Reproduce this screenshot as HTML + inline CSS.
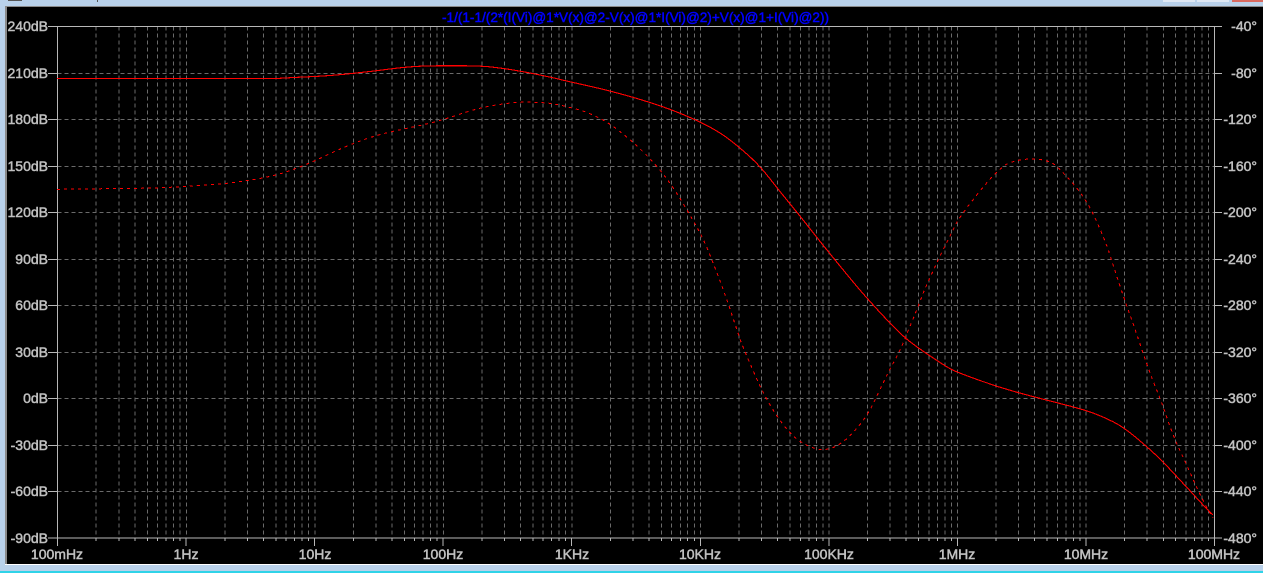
<!DOCTYPE html>
<html>
<head>
<meta charset="utf-8">
<style>
html,body{margin:0;padding:0;width:1263px;height:573px;overflow:hidden;background:#b9d1ea}
svg{display:block;position:absolute;left:0;top:0}
text{font-family:"Liberation Sans",sans-serif;font-size:14px;fill:#c0c0c0;stroke:#c0c0c0;stroke-width:.5}
.l{text-anchor:end}
.b{text-anchor:middle}
</style>
</head>
<body>
<svg width="1263" height="573" viewBox="0 0 1263 573">
<rect x="0" y="0" width="1263" height="573" fill="#b9d1ea"/>
<rect x="5" y="6" width="1258" height="1" fill="#8a8a8a"/>
<rect x="5" y="6" width="2" height="558" fill="#8a8a8a"/>
<rect x="7" y="7" width="1256" height="557" fill="#000"/>
<rect x="5" y="564" width="1258" height="1" fill="#fff"/>
<rect x="0" y="571" width="1263" height="2" fill="#2fd3e8"/>
<rect x="1163" y="0" width="32" height="2" fill="#dfe8f3"/>
<rect x="1197" y="0" width="32" height="2" fill="#dfe8f3"/>
<rect x="1232" y="0" width="31" height="2" fill="#d9695f"/>
<rect x="8" y="0" width="14" height="1" fill="#555"/>
<rect x="97" y="0" width="1" height="2" fill="#555"/>
<defs>
<g id="d" shape-rendering="crispEdges">
<g stroke="#6a6a6a" stroke-width="1" stroke-dasharray="4 3" fill="none">
<path d="M38.7 26.5V538M61.3 26.5V538M77.4 26.5V538M89.8 26.5V538M100 26.5V538M108.6 26.5V538M116 26.5V538M122.6 26.5V538"/>
</g>
<g stroke="#b8b8b8" stroke-width="1" fill="none">
<path d="M38.7 538V541M61.3 538V541M77.4 538V541M89.8 538V541M100 538V541M108.6 538V541M116 538V541M122.6 538V541M128.55 538V546"/>
</g>
</g>
</defs>
<g shape-rendering="crispEdges">
<use href="#d" x="57.5"/>
<use href="#d" x="186.05"/>
<use href="#d" x="314.6"/>
<use href="#d" x="443.15"/>
<use href="#d" x="571.7"/>
<use href="#d" x="700.25"/>
<use href="#d" x="828.8"/>
<use href="#d" x="957.35"/>
<use href="#d" x="1085.9"/>
<path d="M186.5 26.5V538M315 26.5V538M443.5 26.5V538M572 26.5V538M700.5 26.5V538M829 26.5V538M957.5 26.5V538M1086 26.5V538" stroke="#6a6a6a" stroke-dasharray="4 3" fill="none"/>
<path d="M57.5 73.5H1214.5M57.5 119.5H1214.5M57.5 166.5H1214.5M57.5 212.5H1214.5M57.5 259.5H1214.5M57.5 305.5H1214.5M57.5 352.5H1214.5M57.5 398.5H1214.5M57.5 445.5H1214.5M57.5 491.5H1214.5" stroke="#6a6a6a" stroke-dasharray="4 3" fill="none"/>
<path d="M48 26.5H1222M48 538H1222M57.5 26V546M1214.5 26V546" stroke="#b8b8b8" fill="none"/>
<path d="M48 73.5H57M48 119.5H57M48 166.5H57M48 212.5H57M48 259.5H57M48 305.5H57M48 352.5H57M48 398.5H57M48 445.5H57M48 491.5H57M1215 73.5H1222M1215 119.5H1222M1215 166.5H1222M1215 212.5H1222M1215 259.5H1222M1215 305.5H1222M1215 352.5H1222M1215 398.5H1222M1215 445.5H1222M1215 491.5H1222" stroke="#b8b8b8" fill="none"/>
<path fill="none" stroke="#ff0000" stroke-width="1" stroke-dasharray="3 4" d="M57 189.3L121 188.5Q150 188.3 166 187.5Q183 186.7 203 185.3Q223 184 235 182.3Q247 180.7 257 179Q267 177.3 277 174.6Q287 172 298 167.6Q310 163.3 328 154.5Q347 145.7 362 140.3Q377 135 392 131.6Q407 128.3 422 125Q437 121.7 452 116.7Q467 111.7 478 108.7Q490 105.7 505 103.7Q520 101.7 533 102.2Q547 102.7 554 104Q562 105.3 574 108.5Q587 111.7 598 117.5Q610 123.3 621 132.5Q633 141.7 645 153.7Q657 165.7 666 177.8Q675 190 684 205Q693 220 700 233Q707 246.7 713 263Q720 280 729 306Q738 333 741 342Q745 352 755 375Q765 398 777 416Q790 435 801 442Q813 449 821 449.5Q830 450 838 445Q847 440 857 428Q867 417 875 400Q883 383 891 367Q900 352 908 331Q917 310 924 291Q932 273 942 252Q952 232 957 222Q963 212 980 191Q997 170 1007 164Q1018 159 1032 159Q1047 159 1055 165Q1063 172 1075 186Q1087 200 1096 220Q1105 240 1109 252Q1113 265 1120 286Q1127 307 1130 315Q1133 323 1140 344Q1147 365 1153 381Q1160 398 1165 412Q1170 427 1176 442Q1183 457 1193 479Q1203 502 1213 518"/>
<path fill="none" stroke="#ff0000" stroke-width="1.1" d="M57 78.3L280 78.3Q296 77.3 308 76.8Q320 76.3 332.5 75.3Q345 74.3 360 72.6Q375 71 389 69.1Q403 67.3 415 66.5Q427 65.7 453 65.7Q480 65.7 491.5 67Q503 68.3 515 70.3Q527 72.3 540 75Q553 77.7 559 79.2Q565 80.7 587.5 85.7Q610 90.7 633.5 97.5Q657 104.3 675 111.3Q693 118.3 706.5 125.3Q720 132.3 730 140Q740 147.7 750 156.8Q760 166 770 178.8Q780 191.7 790 203.8Q800 216 813 232.5Q826 249 839 264.8Q852 280.7 859.5 289.5Q867 298.3 878.5 310.8Q890 323.3 898.5 331.6Q907 340 918.5 348Q930 356 940 362.5Q950 369 955 371.1Q960 373.3 978.5 380Q997 386.7 1015 391.7Q1033 396.7 1058 403Q1083 409.3 1093 413Q1103 416.7 1113 421.7Q1123 426.7 1135 436.7Q1147 446.7 1155 454.2Q1163 461.7 1173 472.5Q1183 483.3 1193 494Q1203 505 1208 510L1213 515"/>
</g>
<text x="442" y="22" textLength="387" lengthAdjust="spacingAndGlyphs" style="fill:#0000ff;stroke:#0000ff">-1/(1-1/(2*(I(Vi)@1*V(x)@2-V(x)@1*I(Vi)@2)+V(x)@1+I(Vi)@2))</text>
<text class="l" x="48" y="31">240dB</text>
<text class="l" x="48" y="78">210dB</text>
<text class="l" x="48" y="124">180dB</text>
<text class="l" x="48" y="171">150dB</text>
<text class="l" x="48" y="217">120dB</text>
<text class="l" x="48" y="264">90dB</text>
<text class="l" x="48" y="310">60dB</text>
<text class="l" x="48" y="357">30dB</text>
<text class="l" x="48" y="403">0dB</text>
<text class="l" x="48" y="450">-30dB</text>
<text class="l" x="48" y="496">-60dB</text>
<text class="l" x="48" y="543">-90dB</text>
<text class="l" x="1257" y="31">-40°</text>
<text class="l" x="1257" y="78">-80°</text>
<text class="l" x="1257" y="124">-120°</text>
<text class="l" x="1257" y="171">-160°</text>
<text class="l" x="1257" y="217">-200°</text>
<text class="l" x="1257" y="264">-240°</text>
<text class="l" x="1257" y="310">-280°</text>
<text class="l" x="1257" y="357">-320°</text>
<text class="l" x="1257" y="403">-360°</text>
<text class="l" x="1257" y="450">-400°</text>
<text class="l" x="1257" y="496">-440°</text>
<text class="l" x="1257" y="543">-480°</text>
<text class="b" x="57" y="559">100mHz</text>
<text class="b" x="186" y="559">1Hz</text>
<text class="b" x="315" y="559">10Hz</text>
<text class="b" x="443" y="559">100Hz</text>
<text class="b" x="572" y="559">1KHz</text>
<text class="b" x="700" y="559">10KHz</text>
<text class="b" x="829" y="559">100KHz</text>
<text class="b" x="957" y="559">1MHz</text>
<text class="b" x="1086" y="559">10MHz</text>
<text class="b" x="1214" y="559">100MHz</text>
</svg>
</body>
</html>
